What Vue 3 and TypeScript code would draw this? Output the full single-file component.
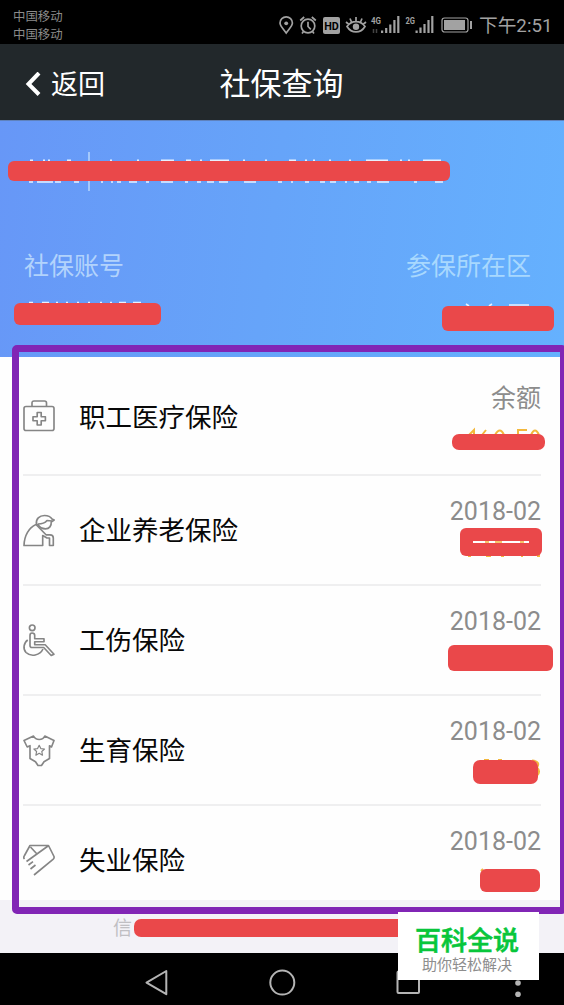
<script setup lang="ts">
interface Insurance {
  icon: 'medical' | 'pension' | 'injury' | 'maternity' | 'unemployment'
  name: string
  note: string
}

interface Mark {
  x: number
  y: number
  w: number
  h: number
  r: number
}

const rows: Insurance[] = [
  { icon: 'medical', name: '职工医疗保险', note: '余额' },
  { icon: 'pension', name: '企业养老保险', note: '2018-02' },
  { icon: 'injury', name: '工伤保险', note: '2018-02' },
  { icon: 'maternity', name: '生育保险', note: '2018-02' },
  { icon: 'unemployment', name: '失业保险', note: '2018-02' },
]

const marks: Mark[] = [
  { x: 8, y: 161, w: 442, h: 20, r: 6 },
  { x: 14, y: 303, w: 147, h: 22, r: 6 },
  { x: 442, y: 306, w: 112, h: 25, r: 6 },
  { x: 452, y: 434, w: 93, h: 16, r: 7 },
  { x: 460, y: 528, w: 82, h: 28, r: 6 },
  { x: 448, y: 645, w: 105, h: 26, r: 6 },
  { x: 473, y: 760, w: 65, h: 24, r: 7 },
  { x: 480, y: 869, w: 60, h: 23, r: 6 },
  { x: 134, y: 919, w: 290, h: 18, r: 7 },
]
</script>

<template>
  <div class="screen">
    <div class="status">
      <div class="carriers">
        <span>中国移动</span>
        <span>中国移动</span>
      </div>
      <svg class="status-icons" width="166" height="44" viewBox="0 0 166 44" fill="none" stroke="#a2a2a2" stroke-width="1.7">
        <path d="M12.200 33C9 28.500 6 26 6 23a6.200 6.200 0 0 1 12.400 0c0 3-3 5.500-6.200 10z" />
        <circle cx="12.200" cy="23.300" r="1.900" fill="#a2a2a2" stroke="none" />
        <circle cx="34" cy="26" r="6.800" />
        <path d="M34 21.800V26.500l2.800 2.800M26.200 20.500l4-3.500M41.800 20.500l-4-3.500M29.500 31.500l-1.500 2M38.500 31.500l1.500 2" />
        <g transform="translate(-10 0)">
          <rect x="59" y="17" width="17" height="17" rx="2" fill="#a2a2a2" stroke="none" />
          <path d="M83 26.500c4.500-6.500 13.500-6.500 18 0c-4.500 7.300-13.500 7.300-18 0zM92 17v4M86 18.500l1.500 3.500M98 18.500l-1.500 3.500M82 22l3 2.500M102 22l-3 2.500" />
          <circle cx="92" cy="26.700" r="3.200" fill="#a2a2a2" stroke="none" />
          <path stroke-width="2.200" d="M118.100 33v-2.500M122.200 33v-5M126.300 33v-8.500M130.400 33V20M134.300 33V16M152.600 33v-2.500M156.500 33v-5.500M160.500 33v-9M164.500 33V20M168.300 33V16" />
          <path stroke="#444" stroke-width="1.500" d="M109.500 29v4M112.500 29v4" />
          <g fill="#a2a2a2" stroke="none">
            <text class="gen" x="107" y="23.500" textLength="10" lengthAdjust="spacingAndGlyphs">4G</text>
            <text class="gen" x="141.500" y="23.500" textLength="9.500" lengthAdjust="spacingAndGlyphs">2G</text>
          </g>
          <text class="hd" x="60.200" y="29.700" textLength="14.600" lengthAdjust="spacingAndGlyphs">HD</text>
        </g>
      </svg>
      <svg class="battery" width="36" height="44" viewBox="0 0 36 44">
        <rect x="2" y="18" width="26" height="14" rx="2.500" fill="none" stroke="#a2a2a2" stroke-width="1.200" />
        <rect x="4" y="20" width="21" height="10" fill="#a2a2a2" />
        <rect x="30" y="21" width="2" height="8" fill="#a2a2a2" />
      </svg>
      <span class="clock">下午2:51</span>
    </div>

    <header class="header">
      <div class="back">
        <svg width="16" height="26" viewBox="0 0 16 26"><path d="M14 1 3.500 12l10.500 10.500" fill="none" stroke="#fff" stroke-width="4" /></svg>
        <span>返回</span>
      </div>
      <h1>社保查询</h1>
    </header>

    <section class="account">
      <div class="labels">
        <span>社保账号</span>
        <span class="district">参保所在区</span>
      </div>
    </section>

    <main class="list">
      <div v-for="row in rows" :key="row.icon" class="row">
        <svg class="icon" width="34" height="34" viewBox="0 0 34 34">
          <g v-if="row.icon === 'medical'">
            <rect x="2" y="7.500" width="30" height="24" rx="2" />
            <path d="M10 7V4q0-2 2-2h10.500q2 0 2 2v3" />
            <path d="M15.200 13.500h4v4.200h4.200v4h-4.200V26h-4v-4.300H11v-4h4.200z" />
          </g>
          <g v-else-if="row.icon === 'pension'">
            <path d="M14.500 10.500C13.500 5 17.500 1.500 22.500 1.500c4 0 6 1 7.500 3.500l2.200 1-3 2c.5 4-2 6.800-5.700 6.800c-3.500 0-6-1.500-7.500-4.300z" />
            <path d="M16 10c4 0 7-1 9-3.500l5 .5" />
            <path d="M14 10.500C7 13.500 2.300 21.500 2 31.500h18.700V21.500l4.300 2.500h2.500v7.500h3.800V24c0-2-1.300-3.200-3.300-3.200h-4L14 10.500" />
          </g>
          <g v-else-if="row.icon === 'injury'">
            <circle cx="10.200" cy="3.800" r="2.800" />
            <path d="M10 9c1.500 0 2.700 1 2.700 2.500v3.200h9.300v3h-9.300v3h10.500l8.800 9.500-2.800 1.300-7.500-8H10c-1.200 0-2-.8-2-2v-10C8 10 8.500 9 10 9z" />
            <path d="M5.700 16C1.500 19 .8 25 4 28.500c5 4.700 14 3 17-3.500" />
          </g>
          <g v-else-if="row.icon === 'maternity'">
            <path d="M11.500 2 2 6.500l3.200 6.500 2.800-1.300v12.800l5.500 3.200 2.500 3.800h3.500l2.500-3.800 5.500-3.200V11.700l2 1.300L32 6.500 22.800 2C21.500 5 19.500 5.500 17.200 5.500S13 5 11.500 2z" />
            <path d="m17.200 11.300 1.600 3.300 3.700.4-2.700 2.500.7 3.700-3.300-1.900-3.300 1.900.7-3.700-2.700-2.500 3.700-.4z" stroke-width="1.200" />
          </g>
          <g v-else>
            <path d="M2.500 15c-1-1-.7-2.500 0-3.500L8 1.500h18.500l5.500 11q.5 1.500-1 2.800L12 31M4.500 17.500 26 2M8.500 3l6 6.500M6.500 21l4.500-3.300M8.500 25l5-4" />
          </g>
        </svg>
        <span class="name">{{ row.name }}</span>
        <span class="note">{{ row.note }}</span>
      </div>
    </main>

    <footer class="footer">信</footer>

    <nav class="nav">
      <svg width="564" height="52" viewBox="0 0 564 52" fill="none" stroke="#b4b4b4" stroke-width="2">
        <path d="M166.300 18v23.200L146.500 29.600z" stroke-linejoin="round" />
        <circle cx="282.300" cy="29.600" r="12" />
        <rect x="397.500" y="18.500" width="21.500" height="21.500" rx="1" />
        <g fill="#b4b4b4" stroke="none">
          <circle cx="518" cy="19" r="2.800" />
          <circle cx="518" cy="30" r="2.800" />
          <circle cx="518" cy="41.200" r="2.800" />
        </g>
      </svg>
    </nav>

    <svg class="overlay" width="564" height="1005" viewBox="0 0 564 1005">
      <path d="M89 152v39" stroke="#b8d7fc" stroke-width="1.500" />
      <!-- edges of hidden text that show past the cover bars -->
      <g fill="none" stroke="#e6f1ff" stroke-width="1.600">
        <path d="M30 160.300h3M43 160.300h2M48 160.300h2M67 160.300h4M110 160.300h2M137 160.300h2M161 160.300h13M186 160.300h5M200 160.300h2M210 160.300h19M243 160.300h2M265 160.300h2M289 160.300h7M305 160.300h2M313 160.300h2M329 160.300h2M349 160.300h2M366 160.300h22M400 160.300h2M408 160.300h2M423 160.300h18" />
        <path d="M29 182h4M37 182h16M55 182h6M74 182h5M101 182h2M111 182h2M117 182h4M129 182h8M146 182h3M161 182h12M185 182h3M197 182h4M207 182h7M219 182h9M244 182h12M278 182h4M291 182h2M305 182h4M320 182h5M330 182h6M345 182h2M354 182h5M367 182h4M377 182h12M414 182h3M435 182h8" />
        <path d="M29 302.500h4M42 302.500h7M56 302.500h2M66 302.500h2M77 302.500h2M88 302.500h2M100 302.500h2M110 302.500h2M119 302.500h7M133 302.500h8" />
        <path d="m466 304 3 2M492 304l-3 2M509 305h20" />
      </g>
      <g fill="none" stroke="#f3b83c" stroke-width="2">
        <path d="m469 435 5-5v5M482 435l4-5M495 435q5-9 9 0M527 430h-9v5M531 435q4-9 8 0" />
        <path d="M468 556h3M486 556h5M501 556h3M521 556h2M537 556h3M484 760h5M498 760h4M532 760.500q9 1 5 7q4 4 0 8" />
        <path d="M481 871l2-2" />
      </g>
      <rect v-for="(m, i) in marks" :key="i" :x="m.x" :y="m.y" :width="m.w" :height="m.h" :rx="m.r" fill="#ea484a" />
      <path d="M473 542h56" stroke="#fff" stroke-width="2" />
      <path d="M485 542h4M495 542h7M520 542h4" stroke="#f6c46b" stroke-width="2" />
      <rect x="15.500" y="348.500" width="548" height="562" rx="1.500" fill="none" stroke="#8125b5" stroke-width="7" />
    </svg>

    <aside class="badge">
      <strong>百科全说</strong>
      <span>助你轻松解决</span>
    </aside>
  </div>
</template>

<style>
body {
  margin: 0;
  overflow: hidden;
}
</style>

<style scoped>
.screen {
  position: relative;
  width: 564px;
  height: 1005px;
  overflow: hidden;
  background: #fff;
  font-family: Roboto, "Noto Sans CJK SC", sans-serif;
}

.status {
  display: flex;
  height: 44px;
  background: #000;
  color: #a2a2a2;
}

.carriers {
  display: flex;
  flex: none;
  flex-direction: column;
  width: 261px;
  padding: 8px 0 0 13px;
  font-size: 12.400px;
  line-height: 17.500px;
  color: #8b8b8b;
}

.status-icons {
  flex: none;
}

.gen {
  font: bold 9.500px Roboto, sans-serif;
}

.hd {
  font: bold 11px Roboto, sans-serif;
  fill: #000;
  stroke: none;
}

.battery {
  flex: none;
}

.clock {
  margin-left: 3px;
  font-size: 18.700px;
  line-height: 52px;
  white-space: nowrap;
}

.header {
  display: grid;
  grid-template-columns: 219.500px 1fr;
  height: 76px;
  background: #22282b;
  color: #fff;
}

.back {
  display: flex;
  align-items: center;
  gap: 10px;
  padding-left: 25px;
  font-size: 27px;
  line-height: 77px;
}

h1 {
  margin: 0;
  font-size: 31px;
  font-weight: 400;
  line-height: 82px;
}

.account {
  height: 237px;
  box-sizing: border-box;
  padding: 127px 33px 0 24px;
  border-top: 1px solid #5f82bd;
  background: linear-gradient(97deg, #6797f7 0%, #66a4f9 48%, #65b1fe 100%);
}

.labels {
  display: flex;
  justify-content: space-between;
  font-size: 25px;
  line-height: 38px;
  color: #b2d3fc;
}

.district {
  color: #a8d8fe;
}

.list {
  height: 543px;
  overflow: hidden;
  background: #fefefe;
}

.row {
  display: grid;
  grid-template-columns: 56px 1fr auto;
  height: 110px;
  box-sizing: border-box;
  margin: 0 23px;
  border-bottom: 2px solid #efeff0;
}

.row:first-child {
  height: 119px;
  padding-top: 6px;
}

.icon {
  margin-top: 38px;
  margin-left: -1px;
  fill: none;
  stroke: #858585;
  stroke-width: 1.650;
  stroke-linejoin: round;
}

.row:first-child .icon {
  margin-top: 36px;
}

.name {
  font-size: 26.500px;
  line-height: 110px;
  color: #080808;
}

.note {
  font-size: 25px;
  line-height: 72px;
  color: #8c8c8c;
}

.footer {
  height: 53px;
  box-sizing: border-box;
  padding-left: 113px;
  background: #f3f2f7;
  color: #c0bfc3;
  font-size: 19px;
  line-height: 57px;
}

.nav {
  height: 52px;
  background: #000;
}

.overlay {
  position: absolute;
  inset: 0;
}

.badge {
  position: absolute;
  left: 398px;
  top: 912px;
  display: flex;
  flex-direction: column;
  align-items: center;
  width: 141px;
  height: 68px;
  box-sizing: border-box;
  padding: 12px 3px 0 0;
  background: #fff;
}

.badge strong {
  font-size: 26px;
  font-weight: 500;
  line-height: 34px;
  color: #08c63b;
  -webkit-text-stroke: 0.6px #08c63b;
}

.badge span {
  font-size: 15px;
  line-height: 15px;
  color: #8d8d8d;
}
</style>
